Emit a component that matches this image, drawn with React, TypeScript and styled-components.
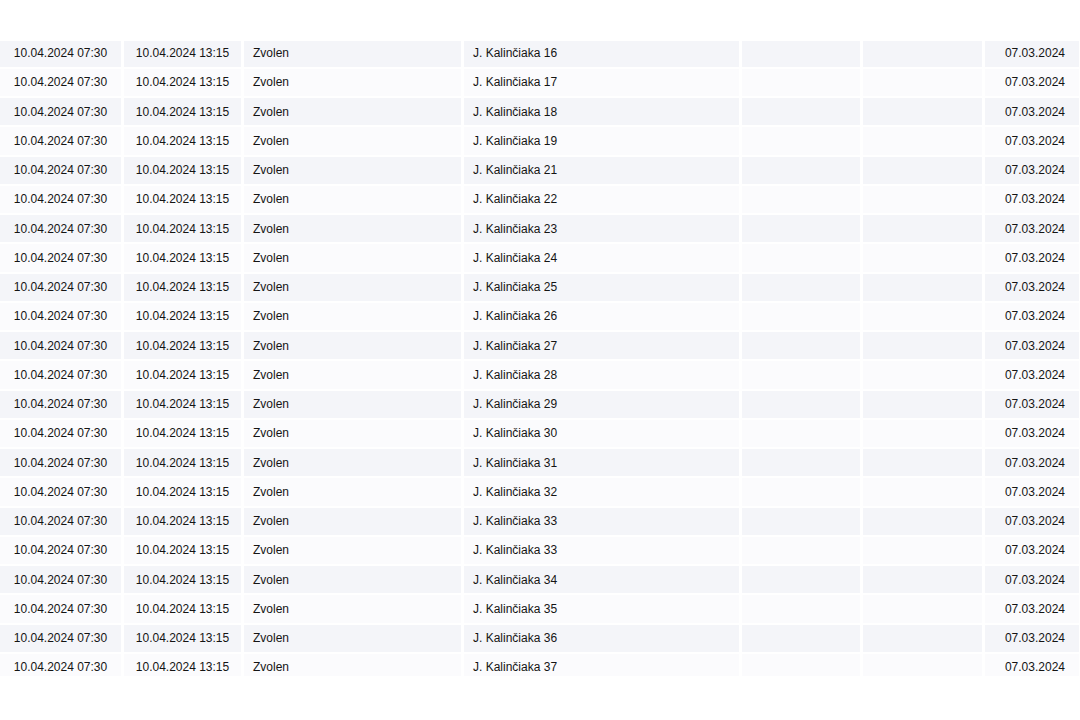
import React from 'react';
import styled, { createGlobalStyle } from 'styled-components';

const GlobalStyle = createGlobalStyle`
    html, body {
        margin: 0;
        padding: 0;
        background: #ffffff;
        font-family: "Liberation Sans", Arial, sans-serif;
    }
`;

const Page = styled.div`
    width: 1080px;
    height: 720px;
    padding-top: 41px;
    box-sizing: border-box;
    background: #ffffff;
`;

const ScrollArea = styled.div`
    height: 635px;
    overflow: hidden;
`;

const Table = styled.div`
    display: flex;
    flex-direction: column;
    gap: 2px;
    margin-top: -1.5px;
`;

const Row = styled.div<{ $odd: boolean }>`
    display: grid;
    grid-template-columns: 121px 117px 217px 275px 118px 119px 94px;
    column-gap: 3px;
    height: 27.25px;
    --cell-bg: ${props => props.$odd ? '#f4f5f9' : '#fbfbfd'};
`;

const Cell = styled.div<{ $align?: 'left' | 'center' | 'right' }>`
    display: flex;
    align-items: center;
    justify-content: ${props => props.$align === 'center' ? 'center' : props.$align === 'right' ? 'flex-end' : 'flex-start'};
    padding: ${props => props.$align === 'right' ? '0 14px 0 0' : props.$align === 'center' ? '0' : '0 0 0 9px'};
    background: var(--cell-bg);
    color: #141414;
    font-size: 12px;
    white-space: nowrap;
    overflow: hidden;
`;

const numbers = [16, 17, 18, 19, 21, 22, 23, 24, 25, 26, 27, 28, 29, 30, 31, 32, 33, 33, 34, 35, 36, 37];

export default function App() {
    return (
        <>
            <GlobalStyle />
            <Page>
                <ScrollArea>
                    <Table>
                        {numbers.map((n, i) => (
                            <Row key={i} $odd={i % 2 === 0}>
                                <Cell $align="center">10.04.2024 07:30</Cell>
                                <Cell $align="center">10.04.2024 13:15</Cell>
                                <Cell>Zvolen</Cell>
                                <Cell>J. Kalinčiaka {n}</Cell>
                                <Cell />
                                <Cell />
                                <Cell $align="right">07.03.2024</Cell>
                            </Row>
                        ))}
                    </Table>
                </ScrollArea>
            </Page>
        </>
    );
}
